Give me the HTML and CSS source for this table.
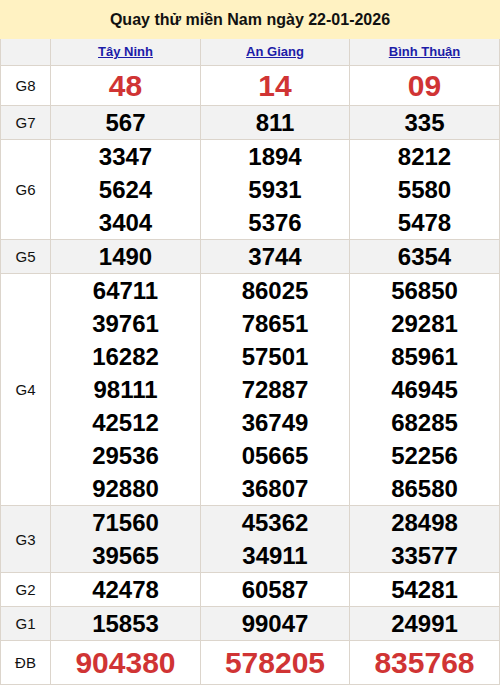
FILE: index.html
```html
<!DOCTYPE html>
<html>
<head>
<meta charset="utf-8">
<link rel="stylesheet" href="styles.css">
</head>
<body>
<div class="title">Quay thử miền Nam ngày 22-01-2026</div>
<table class="kq">
  <colgroup><col class="c0"><col class="c1"><col class="c2"><col class="c3"></colgroup>
  <tr class="head"><td></td><td><a href="#">Tây Ninh</a></td><td><a href="#">An Giang</a></td><td><a href="#">Bình Thuận</a></td></tr>
  <tr class="g8"><td class="lbl">G8</td><td class="red">48</td><td class="red">14</td><td class="red">09</td></tr>
  <tr class="alt"><td class="lbl">G7</td><td>567</td><td>811</td><td>335</td></tr>
  <tr><td class="lbl">G6</td><td>3347<br>5624<br>3404</td><td>1894<br>5931<br>5376</td><td>8212<br>5580<br>5478</td></tr>
  <tr class="alt"><td class="lbl">G5</td><td>1490</td><td>3744</td><td>6354</td></tr>
  <tr><td class="lbl">G4</td><td>64711<br>39761<br>16282<br>98111<br>42512<br>29536<br>92880</td><td>86025<br>78651<br>57501<br>72887<br>36749<br>05665<br>36807</td><td>56850<br>29281<br>85961<br>46945<br>68285<br>52256<br>86580</td></tr>
  <tr class="alt"><td class="lbl">G3</td><td>71560<br>39565</td><td>45362<br>34911</td><td>28498<br>33577</td></tr>
  <tr><td class="lbl">G2</td><td>42478</td><td>60587</td><td>54281</td></tr>
  <tr class="alt"><td class="lbl">G1</td><td>15853</td><td>99047</td><td>24991</td></tr>
  <tr class="db"><td class="lbl">ĐB</td><td class="red">904380</td><td class="red">578205</td><td class="red">835768</td></tr>
</table>
</body>
</html>
```
FILE: styles.css
```css
html, body { margin: 0; padding: 0; background: #fff; }
body { font-family: "Liberation Sans", Arial, sans-serif; color: #000; width: 500px; }
.title {
  background: #fff2c2;
  height: 39px;
  line-height: 39px;
  text-align: center;
  font-weight: bold;
  font-size: 16px;
  color: #111;
}
.kq {
  width: 500px;
  border-collapse: collapse;
  table-layout: fixed;
}
.c0 { width: 50px; }
.c1 { width: 150px; }
.c2 { width: 149px; }
.c3 { width: 150px; }
.kq td {
  border: 1px solid #dcd5cc;
  padding: 0;
  text-align: center;
  font-weight: bold;
  font-size: 24px;
  line-height: 33px;
  color: #000;
}
.kq tr:first-child td { border-top: none; }
.kq td.lbl { font-weight: normal; font-size: 15px; color: #111; }
.head td { background: #f2f2f2; height: 26px; line-height: 26px; font-size: 13px; }
.head a { color: #1c1ca8; text-decoration: underline; }
.alt td { background: #f2f2f2; }
.g8 td { height: 39px; line-height: 39px; }
.g8 td.red { font-size: 30px; }
.db td { height: 43px; line-height: 43px; }
.db td.red { font-size: 30px; }
.kq td.red { color: #d03434; }
```
